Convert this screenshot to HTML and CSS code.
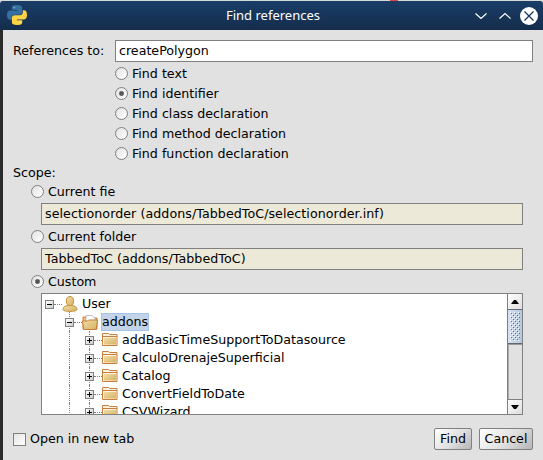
FILE: index.html
```html
<!DOCTYPE html>
<html lang="en">
<head>
<meta charset="utf-8">
<title>Find references</title>
<link rel="stylesheet" href="styles.css">
</head>
<body>
<svg class="defs" width="0" height="0">
  <defs>
    <linearGradient id="gold" x1="0" y1="0" x2="1" y2="1"><stop offset="0" stop-color="#f1dda5"/><stop offset="1" stop-color="#d4b263"/></linearGradient>
    <symbol id="folder" viewBox="0 0 16 14">
      <path d="M.5 12.500V.5h6l1 1h7.500v11z" fill="#fff3df" stroke="#c87f3d"/>
      <path d="M1 3.500h14" stroke="#c87f3d"/>
      <path d="M2 5h12v6.500H2z" fill="url(#gold)"/>
    </symbol>
    <symbol id="folder-open" viewBox="0 0 16 15">
      <path d="M1 14V2h4l1 1h9v11z" fill="#eebf85" stroke="#c87f3d"/>
      <path d="M4 7V.5h6L13 3v4z" fill="#fff" stroke="#aaa" stroke-width=".7"/>
      <path d="M.5 6h5l1-1h9l-1.300 9.500H1.700z" fill="url(#gold)" stroke="#c87f3d"/>
    </symbol>
    <symbol id="user" viewBox="0 0 16 16">
      <path d="M1 13.500c0-3 2.300-3.500 5-4V9h4v.5c2.700.5 5 1 5 4 0 2.600-14 2.600-14 0z" fill="url(#gold)" stroke="#c9913f"/>
      <ellipse cx="8" cy="5" rx="3.600" ry="4.500" fill="url(#gold)" stroke="#c9913f"/>
    </symbol>
  </defs>
</svg>
<div class="desktop"><i class="speck"></i></div>
<header class="titlebar">
  <svg class="python" width="20" height="20" viewBox="0 0 20 20">
    <path d="M10 0C6 0 4.800 1 4.800 2.800v2H10v.8H3C1 5.600 0 7.200 0 10s1 4.700 3 4.700h1.800v-2.200c0-1.700 1-2.700 3-2.700h4.700c1.700 0 2.700-1 2.700-2.700V2.800C15.200 1 13.700 0 10 0z" fill="#3670a0"/>
    <path d="M10 20c4 0 5.200-1 5.200-2.800v-2H10v-.8h7c2 0 3-1.600 3-4.400s-1-4.700-3-4.700h-1.200v2c0 1.700-1 2.900-3 2.900H7.700C6 10.200 4.900 11.200 4.900 12.900v4.300C4.900 19 6.300 20 10 20z" fill="#ffd342"/>
    <circle cx="7.300" cy="2.600" r=".8" fill="#8fb3d0"/><circle cx="12.700" cy="17.400" r=".8" fill="#fff6d2"/>
  </svg>
  <h1 class="title">Find references</h1>
  <svg class="controls" width="64" height="20" viewBox="0 0 64 20">
    <path d="M1.500 7.500l5.500 5 5.500-5M25.500 12.500l5.500-5 5.500 5" fill="none" stroke="#fff" stroke-width="1.200"/>
    <circle cx="55" cy="10" r="9" fill="#fff"/>
    <path d="M50.500 5.500l9 9m0-9l-9 9" stroke="#17365c" stroke-width="1.300"/>
  </svg>
</header>
<main class="dialog">
  <div class="query">
    <span class="label">References to:</span>
    <div class="field">createPolygon</div>
  </div>
  <div class="kinds">
    <div class="option"><i class="radio"></i><span>Find text</span></div>
    <div class="option"><i class="radio on"></i><span>Find identifier</span></div>
    <div class="option"><i class="radio"></i><span>Find class declaration</span></div>
    <div class="option"><i class="radio"></i><span>Find method declaration</span></div>
    <div class="option"><i class="radio"></i><span>Find function declaration</span></div>
  </div>
  <div class="scope-label">Scope:</div>
  <div class="scope">
    <div class="option"><i class="radio"></i><span>Current fie</span></div>
    <div class="field readonly">selectionorder (addons/TabbedToC/selectionorder.inf)</div>
    <div class="option"><i class="radio"></i><span>Current folder</span></div>
    <div class="field readonly">TabbedToC (addons/TabbedToC)</div>
    <div class="option"><i class="radio on"></i><span>Custom</span></div>
    <div class="tree">
      <div class="nodes">
        <div class="node"><i class="toggle"></i><i class="dots"></i><svg class="icon" width="16" height="16"><use href="#user"/></svg><span class="name">User</span></div>
        <div class="node l1"><i class="toggle"></i><i class="dots"></i><svg class="icon" width="16" height="15"><use href="#folder-open"/></svg><span class="name selected">addons</span></div>
        <div class="node l2"><i class="toggle plus"></i><i class="dots"></i><svg class="icon" width="16" height="14"><use href="#folder"/></svg><span class="name">addBasicTimeSupportToDatasource</span></div>
        <div class="node l2"><i class="toggle plus"></i><i class="dots"></i><svg class="icon" width="16" height="14"><use href="#folder"/></svg><span class="name">CalculoDrenajeSuperficial</span></div>
        <div class="node l2"><i class="toggle plus"></i><i class="dots"></i><svg class="icon" width="16" height="14"><use href="#folder"/></svg><span class="name">Catalog</span></div>
        <div class="node l2"><i class="toggle plus"></i><i class="dots"></i><svg class="icon" width="16" height="14"><use href="#folder"/></svg><span class="name">ConvertFieldToDate</span></div>
        <div class="node l2"><i class="toggle plus"></i><i class="dots"></i><svg class="icon" width="16" height="14"><use href="#folder"/></svg><span class="name">CSVWizard</span></div>
      </div>
      <div class="scrollbar">
        <div class="arrow"><svg width="8" height="4"><path d="M0 4L3 0h2l3 4z"/></svg></div>
        <div class="thumb"><div class="grip"></div></div>
        <div class="track"></div>
        <div class="arrow down"><svg width="8" height="4"><path d="M0 0l3 4h2l3-4z"/></svg></div>
      </div>
    </div>
  </div>
  <footer class="actions">
    <i class="checkbox"></i><span class="check-label">Open in new tab</span>
    <div class="button find">Find</div>
    <div class="button cancel">Cancel</div>
  </footer>
</main>
</body>
</html>
```
FILE: styles.css
```css
* { box-sizing: border-box; }
body { margin: 0; width: 543px; height: 460px; overflow: hidden; background: #e1e1e1; color: #000; font: 12.65px/18px "DejaVu Sans", sans-serif; white-space: nowrap; }
.defs { position: absolute; }
.desktop { height: 1px; background: #d5dad8; padding-left: 390px; }
.speck { display: block; width: 8px; height: 1px; background: #d44; }
.titlebar { display: flex; align-items: center; height: 29px; padding: 0 5px 0 7px; background: linear-gradient(#193d67, #152d4c); border-radius: 3px 3px 0 0; }
.title { flex: 1; margin: 0; padding: 0 0 2px 45px; text-align: center; color: #fff; font: 13px/20px "Noto Sans", sans-serif; }
.python, .controls { flex: none; }
.python { margin-bottom: 1px; }
.dialog { height: 430px; padding: 10px 10px 0; border-left: 3px solid #2b2b2b; }
.query { display: flex; height: 22px; align-items: center; }
.label { width: 102px; }
.query .field { flex: 1; }
.field { height: 22px; line-height: 20px; padding-left: 3px; border: 1px solid #808080; background: #fff; }
.readonly { background: #ece9d8; margin-left: 28px; letter-spacing: .06px; }
.kinds { padding: 1px 0 0 102px; }
.option { display: flex; align-items: center; gap: 4px; height: 20px; }
.option span { padding-top: 1px; }
.radio { width: 13px; height: 13px; border: 1px solid #808080; border-radius: 50%; background: linear-gradient(135deg, #e2e2e2, #fff); }
.radio.on { background: radial-gradient(circle, #555 0 1.500px, #888 2.300px, transparent 3px), linear-gradient(135deg, #e2e2e2, #fff); }
.scope-label { height: 18px; padding-top: 1px; margin-bottom: -1px; }
.scope .option { height: 23px; padding-left: 18px; }
.scope .option span { padding-top: 0; }
.scope { padding-right: 10px; }
.tree { display: flex; height: 122px; margin-left: 28px; border: 1px solid #808080; background: #fff; overflow: hidden; }
.nodes { flex: 1; padding-top: 1px; }
.node { display: flex; align-items: center; height: 18px; padding-left: 3px; position: relative; }
.l1 { padding-left: 23px; }
.l2 { padding-left: 43px; }
.l1::before, .l2::before { content: ""; position: absolute; top: 0; bottom: 0; left: 27px; border-left: 1px dotted #808080; }
.l1::before { top: -1px; }
.l2::after { content: ""; position: absolute; top: 0; bottom: 0; left: 47px; border-left: 1px dotted #808080; }
.toggle { width: 9px; height: 9px; border: 1px solid #808080; background: linear-gradient(#000, #000) center/5px 1px no-repeat, linear-gradient(135deg, #fff, #ccc); z-index: 1; }
.plus { background: linear-gradient(#000, #000) center/5px 1px no-repeat, linear-gradient(#000, #000) center/1px 5px no-repeat, linear-gradient(135deg, #fff, #ccc); }
.dots { width: 8px; border-top: 1px dotted #808080; }
.icon { flex: none; }
.name { padding: 0 1px; margin-left: 3px; line-height: 18px; }
.selected { background: #c3d4e8; outline: 1px solid #a3c3e8; outline-offset: -1px; }
.scrollbar { display: flex; flex-direction: column; width: 15px; border-left: 1px solid #808080; background: #e1e1e1; }
.arrow { display: grid; place-items: center; height: 15px; background: linear-gradient(135deg, #fff, #ddd); }
.thumb { height: 35px; padding: 2px; border: solid #666; border-width: 1px 0; background: linear-gradient(90deg, #d5e3f4, #b3c7e1); }
.grip { height: 29px; background: conic-gradient(from 0deg at 1px 1px, transparent 75%, #5a7290 0) 1px 1px/4px 4px, conic-gradient(from 0deg at 1px 1px, transparent 75%, #5a7290 0) 3px 3px/4px 4px, conic-gradient(from 0deg at 1px 1px, transparent 75%, #fff 0) 0 0/4px 4px, conic-gradient(from 0deg at 1px 1px, transparent 75%, #fff 0) 2px 2px/4px 4px; }
.track { flex: 1; border-left: 1px solid #aaa; border-top: 1px solid #999; }
.down { border-top: 1px solid #808080; }
.actions { display: flex; align-items: center; height: 22px; margin-top: 13px; }
.checkbox { width: 13px; height: 13px; border: 1px solid #808080; background: linear-gradient(135deg, #e4e4e4, #fff); }
.check-label { flex: 1; margin-left: 4px; }
.button { height: 22px; line-height: 20px; text-align: center; border: 1px solid #808080; border-radius: 2px; background: linear-gradient(135deg, #fff, #e0e0e0 55%, #b5b5b5); }
.find { width: 38px; margin-right: 7px; }
.cancel { width: 54px; }
```
